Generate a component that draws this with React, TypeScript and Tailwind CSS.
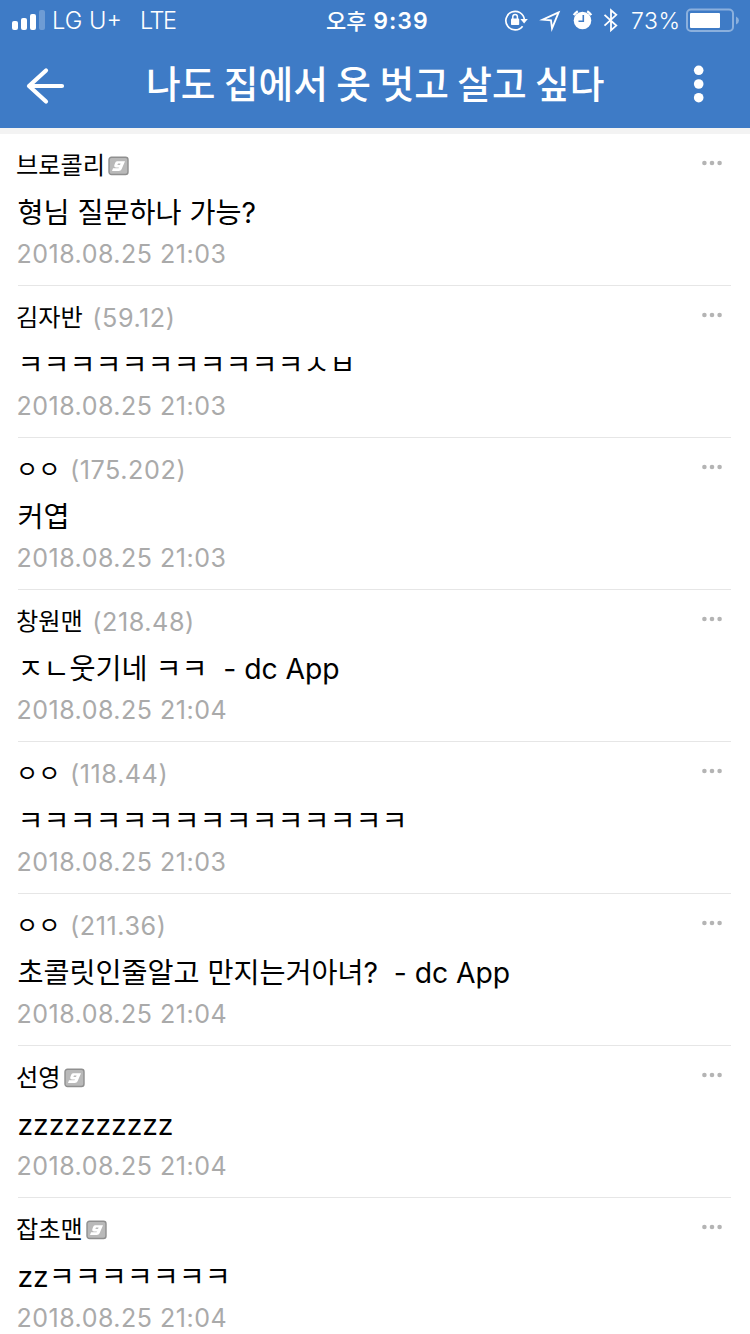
import type { ReactNode } from "react";

type Comment = { name: string; ip?: string; body: ReactNode; time: string };

const comments: Comment[] = [
  { name: "브로콜리", body: "형님 질문하나 가능?", time: "21:03" },
  { name: "김자반", ip: "59.12", body: "ㅋㅋㅋㅋㅋㅋㅋㅋㅋㅋㅋㅅㅂ", time: "21:03" },
  { name: "ㅇㅇ", ip: "175.202", body: "커엽", time: "21:03" },
  { name: "창원맨", ip: "218.48", body: "ㅈㄴ웃기네 ㅋㅋ  - dc App", time: "21:04" },
  { name: "ㅇㅇ", ip: "118.44", body: "ㅋㅋㅋㅋㅋㅋㅋㅋㅋㅋㅋㅋㅋㅋㅋ", time: "21:03" },
  { name: "ㅇㅇ", ip: "211.36", body: "초콜릿인줄알고 만지는거아녀?  - dc App", time: "21:04" },
  { name: "선영", body: "zzzzzzzzzz", time: "21:04" },
  { name: "잡초맨", body: "zzㅋㅋㅋㅋㅋㅋㅋ", time: "21:04" },
];

function GalleryBadge() {
  return (
    <svg className="ml-[3px] mt-[8px] h-[20px] w-[21px] shrink-0" viewBox="0 0 21 20">
      <rect x="1" y="1.2" width="19" height="17.3" rx="2.5" fill="#b9b9b9" stroke="#8f8f8f" strokeWidth="1.4" />
      <path d="M9 5.2H17L13.6 13.2Q12.9 15 10.8 15H4L5 12.3H10.6L11 11.4H8.2Q5.6 11.4 6.4 9L7 7.2Q7.6 5.2 9 5.2Z" fill="#fff" />
      <path d="M10 7.4H12.6L12 9H9.4Z" fill="#b9b9b9" />
    </svg>
  );
}

function StatusBar() {
  return (
    <div className="flex h-10 items-center text-[23px] leading-[42px] text-white">
      <svg className="ml-3 h-5 w-[33px]" viewBox="0 0 33 20" fill="#fff">
        <rect y="11" width="6" height="9" rx="2" />
        <rect x="9" y="8" width="6" height="12" rx="2" />
        <rect x="18" y="4" width="6" height="16" rx="2" />
        <rect x="27" width="6" height="20" rx="2" opacity=".25" />
      </svg>
      <span className="ml-[7px] w-[88px] whitespace-nowrap pt-[2px] text-[23.7px] font-light">LG U+</span>
      <span className="w-[186px] pt-[2px] text-[23.5px] font-light tracking-[-1.5px]">LTE</span>
      <span className="w-[178px] whitespace-nowrap pt-[2px] font-semibold tracking-[1px]">
        <span className="text-[22px] font-medium tracking-normal">오후</span> 9:39
      </span>
      <svg className="h-10 w-[117px]" viewBox="504 0 117 40" fill="#fff">
        <path d="M522.6 26.2A9.3 9.3 0 1 1 524.4 19.6" fill="none" stroke="#fff" strokeWidth="1.7" />
        <path d="M520.4 19h7.4l-3.7 4.6z" />
        <rect x="511" y="18.6" width="8.2" height="6.4" rx="0.8" />
        <path d="M512.8 19v-2.3a2.3 2.3 0 0 1 4.6 0V19" fill="none" stroke="#fff" strokeWidth="1.5" />
        <path d="M558.6 12.4 542.6 19.6 551 20.4 552 28.4Z" fill="none" stroke="#fff" strokeWidth="1.8" />
        <circle cx="582.5" cy="20.5" r="8.8" />
        <path d="M573.8 15.2a12 12 0 0 1 4-4M591.2 15.2a12 12 0 0 0-4-4" fill="none" stroke="#fff" strokeWidth="2.4" />
        <path d="M583.3 15v6.2h-4.8" fill="none" stroke="#3e7bc6" strokeWidth="1.6" />
        <path d="M604.5 14.8 616.3 25.6 611 30.2V10.2L616.3 14.8 604.5 25.6" fill="none" stroke="#fff" strokeWidth="1.8" />
      </svg>
      <span className="ml-[10px] w-[55px] whitespace-nowrap pt-[2px] font-light tracking-[0.5px]">73%</span>
      <svg className="h-[24px] w-[54px]" viewBox="0 0 54 24">
        <rect x="1" y="1.5" width="46" height="21.5" rx="4" fill="none" stroke="#8bb0dd" strokeWidth="2" />
        <rect x="4" y="5" width="30" height="15" rx="1" fill="#fff" />
        <path d="M50 8.5q3 1.5 3 4t-3 4z" fill="#8bb0dd" />
      </svg>
    </div>
  );
}

function TitleBar() {
  return (
    <div className="flex h-[88px] text-white">
      <svg className="ml-[25px] mt-[26px] h-10 w-10 shrink-0" viewBox="0 0 40 40">
        <path d="M37 20H4M21 4.5 4 20l17 15.5" fill="none" stroke="#fff" strokeWidth="4.2" strokeLinecap="round" strokeLinejoin="round" />
      </svg>
      <h1 className="ml-[81px] w-[540px] whitespace-nowrap font-['Noto_Sans_CJK_KR',sans-serif] text-[37.7px] font-medium leading-[84px]">
        나도 집에서 옷 벗고 살고 싶다
      </h1>
      <svg className="ml-[7px] mt-[25px] h-10 w-3 shrink-0" viewBox="0 0 12 40" fill="#fff">
        <circle cx="5.7" cy="5.3" r="4.8" />
        <circle cx="5.7" cy="19" r="4.8" />
        <circle cx="5.7" cy="32.7" r="4.8" />
      </svg>
    </div>
  );
}

function CommentRow({ name, ip, body, time }: Comment) {
  return (
    <li className="h-[152px] pl-4 pr-[19px]">
      <div className="flex h-[151px] flex-col pt-[14px]">
        <div className="flex h-9 leading-9">
          <span className="text-[24.2px]">{name}</span>
          {ip ? (
            <span className="ml-[9.5px] text-[25.2px] tracking-[0.55px] text-[#aaaaaa]">({ip})</span>
          ) : (
            <GalleryBadge />
          )}
          <svg className="ml-auto mr-[9px] mt-[12px] h-[6px] w-5" viewBox="0 0 20 6" fill="#b4b4b4">
            <circle cx="2.4" cy="3" r="2.3" />
            <circle cx="10" cy="3" r="2.3" />
            <circle cx="17.6" cy="3" r="2.3" />
          </svg>
        </div>
        <p className="ml-[1.5px] mt-[7px] h-11 whitespace-pre text-[28.3px] leading-[44px] tracking-[-0.03px]">
          {body}
        </p>
        <time className="ml-[0.5px] h-10 whitespace-pre text-[25px] leading-[38px] tracking-[0.5px] text-[#aaaaaa]">
          2018.08.25 {time}
        </time>
      </div>
      <div className="ml-[2px] h-px bg-[#e6e6e6]" />
    </li>
  );
}

export default function App() {
  return (
    <div className="h-[1334px] w-[750px] overflow-hidden bg-white font-['Inter','Noto_Sans_CJK_KR',sans-serif] text-black">
      <header className="h-32 bg-[#3e7bc6]">
        <StatusBar />
        <TitleBar />
      </header>
      <div className="h-[6px] bg-[#f3f3f3]" />
      <ul>
        {comments.map((c, i) => (
          <CommentRow key={i} {...c} />
        ))}
      </ul>
    </div>
  );
}
